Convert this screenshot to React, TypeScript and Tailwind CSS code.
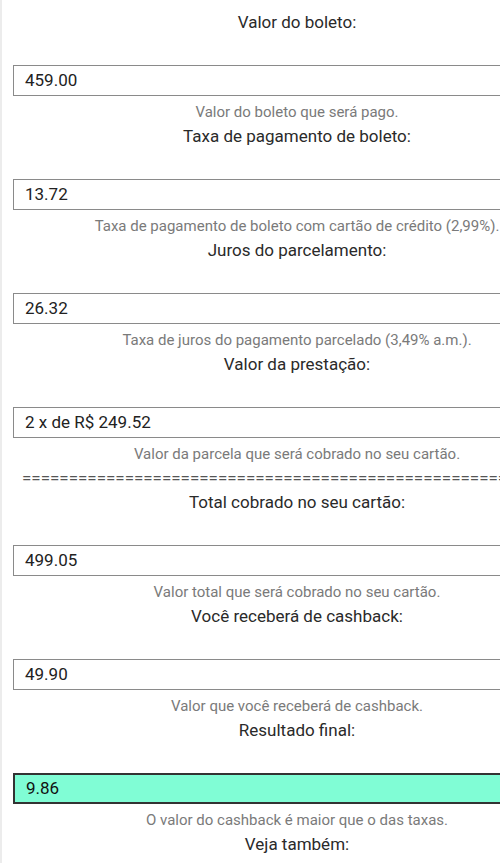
import React from "react";

type Field = {
  label: string;
  value: string;
  help: string;
  highlight?: boolean;
};

const before: Field[] = [
  { label: "Valor do boleto:", value: "459.00", help: "Valor do boleto que será pago." },
  {
    label: "Taxa de pagamento de boleto:",
    value: "13.72",
    help: "Taxa de pagamento de boleto com cartão de crédito (2,99%).",
  },
  {
    label: "Juros do parcelamento:",
    value: "26.32",
    help: "Taxa de juros do pagamento parcelado (3,49% a.m.).",
  },
  {
    label: "Valor da prestação:",
    value: "2 x de R$ 249.52",
    help: "Valor da parcela que será cobrado no seu cartão.",
  },
];

const after: Field[] = [
  {
    label: "Total cobrado no seu cartão:",
    value: "499.05",
    help: "Valor total que será cobrado no seu cartão.",
  },
  {
    label: "Você receberá de cashback:",
    value: "49.90",
    help: "Valor que você receberá de cashback.",
  },
  {
    label: "Resultado final:",
    value: "9.86",
    help: "O valor do cashback é maior que o das taxas.",
    highlight: true,
  },
];

function FieldBlock({ f }: { f: Field }) {
  return (
    <div className="flex flex-col">
      <p className="text-center text-[17px] leading-[24px] text-[#2a2a2a]">{f.label}</p>
      <div
        className={
          f.highlight
            ? "mt-[31px] h-[31px] flex items-center pl-[11px] border-2 border-[#333] bg-[#80fdd5] text-[17px] text-[#111]"
            : "mt-[31px] h-[31px] flex items-center pl-[11px] border border-[#8a8a8a] bg-white text-[17px] text-[#222]"
        }
      >
        {f.value}
      </div>
      <p className="mt-[6px] mb-[2px] text-center text-[15px] leading-[20px] text-[#7a7a7a] whitespace-nowrap">
        {f.help}
      </p>
    </div>
  );
}

export default function App() {
  return (
    <div
      className="w-[500px] h-[863px] overflow-hidden bg-white border-l-[2px] border-[#ececec]"
      style={{ fontFamily: "Roboto, 'Noto Sans', sans-serif" }}
    >
      <div className="w-[568px] ml-[11px] pt-[10px] flex flex-col">
        {before.map((f) => (
          <FieldBlock key={f.label} f={f} />
        ))}
        <div className="pl-[9px] h-[24px] flex items-center overflow-hidden">
          <span className="text-[17px] leading-[24px] text-[#555] whitespace-nowrap">{"=".repeat(58)}</span>
        </div>
        {after.map((f) => (
          <FieldBlock key={f.label} f={f} />
        ))}
        <p className="text-center text-[17px] leading-[24px] text-[#2a2a2a]">Veja também:</p>
      </div>
    </div>
  );
}
